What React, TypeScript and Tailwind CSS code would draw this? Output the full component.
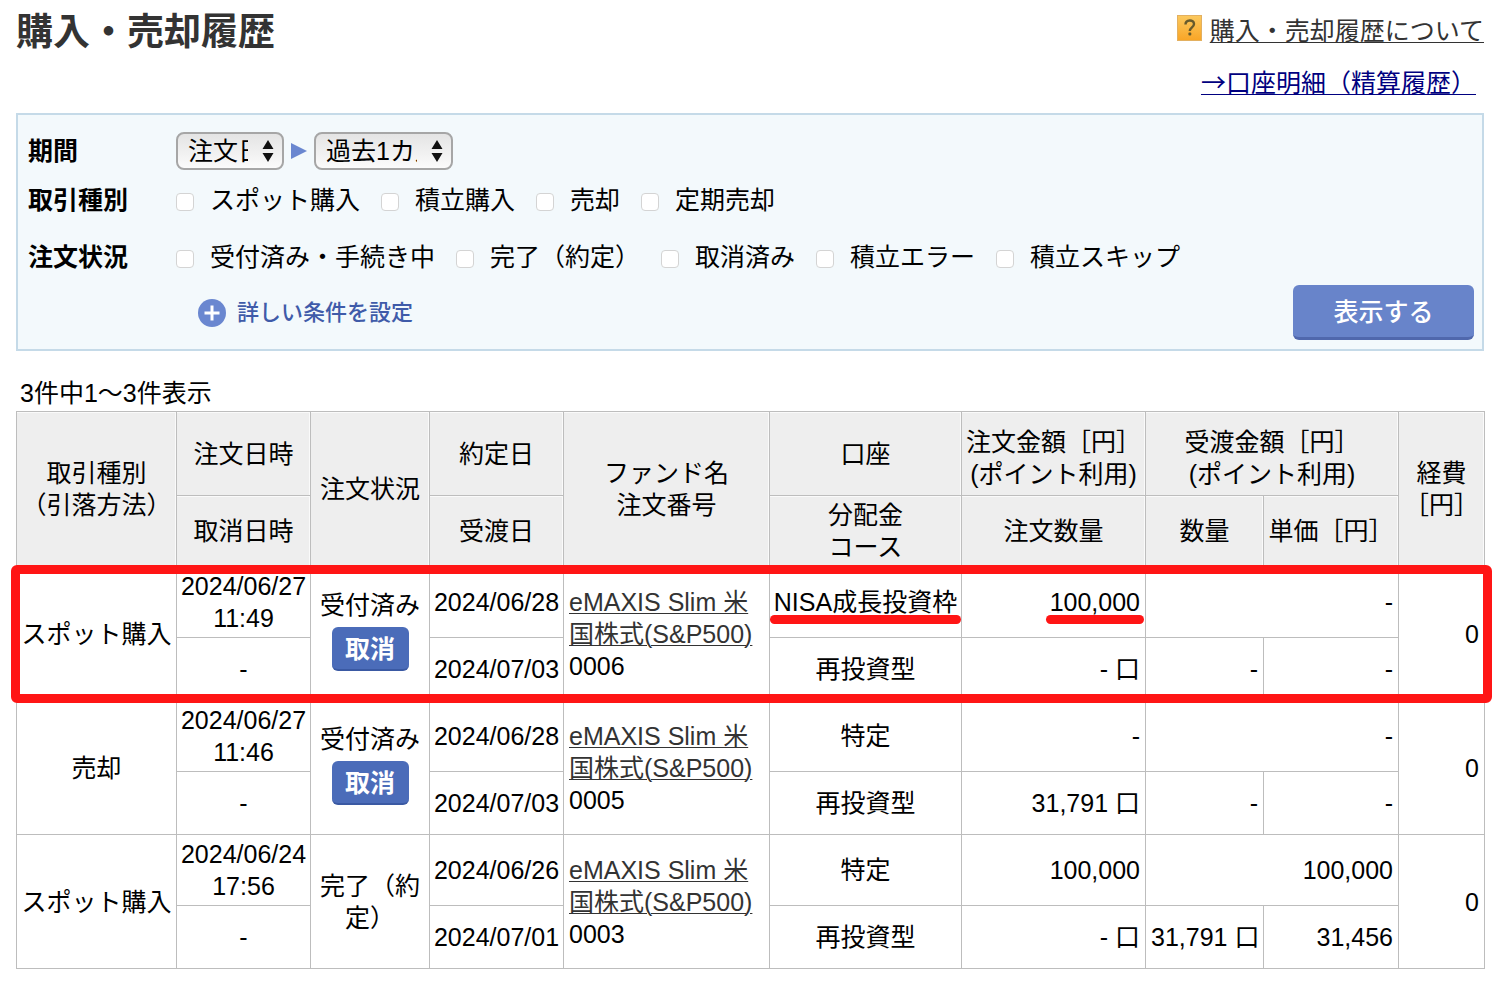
import { type ReactNode } from 'react';

type Order = {
  id: string;
  type: string;
  date: string;
  time: string;
  status: string;
  cancelable?: boolean;
  contractDate: string;
  deliveryDate: string;
  account: string;
  amount: string;
  orderUnits: string;
  settlement: string;
  units: string;
  price: string;
  marked?: boolean;
};

const orders: Order[] = [
  {
    id: '0006',
    type: 'スポット購入',
    date: '2024/06/27',
    time: '11:49',
    status: '受付済み',
    cancelable: true,
    contractDate: '2024/06/28',
    deliveryDate: '2024/07/03',
    account: 'NISA成長投資枠',
    amount: '100,000',
    orderUnits: '- 口',
    settlement: '-',
    units: '-',
    price: '-',
    marked: true,
  },
  {
    id: '0005',
    type: '売却',
    date: '2024/06/27',
    time: '11:46',
    status: '受付済み',
    cancelable: true,
    contractDate: '2024/06/28',
    deliveryDate: '2024/07/03',
    account: '特定',
    amount: '-',
    orderUnits: '31,791 口',
    settlement: '-',
    units: '-',
    price: '-',
  },
  {
    id: '0003',
    type: 'スポット購入',
    date: '2024/06/24',
    time: '17:56',
    status: '完了（約定）',
    contractDate: '2024/06/26',
    deliveryDate: '2024/07/01',
    account: '特定',
    amount: '100,000',
    orderUnits: '- 口',
    settlement: '100,000',
    units: '31,791 口',
    price: '31,456',
  },
];

const tradeTypes = ['スポット購入', '積立購入', '売却', '定期売却'];
const orderStatuses = ['受付済み・手続き中', '完了（約定）', '取消済み', '積立エラー', '積立スキップ'];

const Select = ({ label, options, className }: { label: string; options: string[]; className: string }) => (
  <div className={`relative ${className}`}>
    <select
      aria-label={label}
      className="h-[38px] w-full appearance-none rounded-lg border-2 border-[#a6a6a6] bg-linear-to-b from-[#e4e4e4] to-[#fbfbfb] pl-[10px] pr-[34px] text-black"
    >
      {options.map((o) => (
        <option key={o}>{o}</option>
      ))}
    </select>
    <svg viewBox="0 0 12 22" className="pointer-events-none absolute right-[10px] top-2 h-[22px] w-3" fill="#111">
      <path d="M6 0 11.5 9H.5zM6 22 .5 13h11z" />
    </svg>
  </div>
);

const CheckGroup = ({ items }: { items: string[] }) => (
  <div className="flex flex-wrap gap-x-[21px]">
    {items.map((item) => (
      <label key={item} className="flex items-center gap-4">
        <input
          type="checkbox"
          className="mt-1 size-[18px] appearance-none rounded-sm border border-[#d4d4d4] bg-white checked:bg-[#4b6cb9]"
        />
        {item}
      </label>
    ))}
  </div>
);

const FilterRow = ({ label, className, children }: { label: string; className: string; children: ReactNode }) => (
  <div className={`flex items-center ${className}`}>
    <div className="w-[148px] shrink-0 font-bold">{label}</div>
    {children}
  </div>
);

const Mark = ({ on, children }: { on?: boolean; children: ReactNode }) => (
  <span className="relative inline-block whitespace-nowrap">
    {children}
    {on && <span className="absolute -inset-x-1 top-[29px] h-[9px] rounded-full bg-[#ff1515]" />}
  </span>
);

const Th = ({ pad = 'p-0', children, ...rest }: { pad?: string; children: ReactNode; rowSpan?: number; colSpan?: number }) => (
  <th className={`border border-[#bdbdbd] bg-[#eeeeee] font-normal shadow-[inset_-1px_1px_0_#fafafa] ${pad}`} {...rest}>
    {children}
  </th>
);

const Td = ({ align = 'text-center px-0', children, ...rest }: { align?: string; children: ReactNode; rowSpan?: number; colSpan?: number }) => (
  <td className={`border border-[#bdbdbd] py-0 ${align}`} {...rest}>
    {children}
  </td>
);

const OrderRows = ({ order }: { order: Order }) => (
  <tbody>
    <tr className="h-[71px]">
      <Td rowSpan={2}>{order.type}</Td>
      <Td>
        {order.date}
        <br />
        {order.time}
      </Td>
      <Td align="text-center px-[5px]" rowSpan={2}>
        {order.status}
        {order.cancelable && (
          <button
            type="button"
            className="mx-auto mb-2 mt-1.5 block h-11 w-[77px] rounded-md border-b-2 border-[#3a59a3] bg-[#4b6cb9] pt-0.5 font-bold text-white"
          >
            取消
          </button>
        )}
      </Td>
      <Td>{order.contractDate}</Td>
      <Td align="text-left px-[5px]" rowSpan={2}>
        <a href="#fund" className="text-[#333] underline decoration-1 underline-offset-2">
          eMAXIS Slim 米国株式(S&amp;P500)
        </a>
        <br />
        {order.id}
      </Td>
      <Td>
        <Mark on={order.marked}>{order.account}</Mark>
      </Td>
      <Td align="text-right px-[5px]">
        <Mark on={order.marked}>{order.amount}</Mark>
      </Td>
      <Td align="text-right px-[5px]" colSpan={2}>{order.settlement}</Td>
      <Td align="text-right px-[5px]" rowSpan={2}>0</Td>
    </tr>
    <tr className="h-[63px]">
      <Td>-</Td>
      <Td>{order.deliveryDate}</Td>
      <Td>再投資型</Td>
      <Td align="text-right px-[5px]">{order.orderUnits}</Td>
      <Td align="text-right px-[5px] whitespace-nowrap">{order.units}</Td>
      <Td align="text-right px-[5px]">{order.price}</Td>
    </tr>
  </tbody>
);

const App = () => {
  return (
    <div className="bg-white px-4 pb-3 font-['Liberation_Sans','Noto_Sans_CJK_JP',sans-serif] text-[25px] leading-8 text-black" lang="ja">
      <header className="flex items-start justify-between pt-[15px]">
        <h1 className="text-[37px] font-bold leading-9 text-[#333]">購入・売却履歴</h1>
        <div className="flex flex-col items-end gap-[18px]">
          <div className="flex items-start gap-2">
            <svg viewBox="0 0 25 26" className="h-[26px] w-[25px]">
              <defs>
                <linearGradient id="help" x1="0" y1="0" x2="0" y2="1">
                  <stop offset="0" stopColor="#fbc95f" />
                  <stop offset="1" stopColor="#f9a526" />
                </linearGradient>
              </defs>
              <rect x=".5" y=".5" width="24" height="25" fill="url(#help)" stroke="#e3b060" />
              <path d="M8.500 9.500C8.500 4.200 17 4.200 17 9c0 3.300-4.200 3.400-4.200 7" fill="none" stroke="#665a2c" strokeWidth="2.400" />
              <rect x="11.400" y="17.600" width="2.900" height="2.900" rx="1" fill="#665a2c" />
            </svg>
            <a href="#about" className="text-[#333] underline decoration-1 underline-offset-2">購入・売却履歴について</a>
          </div>
          <a href="#statement" className="mr-2 text-[#000080] underline decoration-1 underline-offset-2">
            <span className="font-['Noto_Sans_CJK_JP',sans-serif]">→</span>口座明細（精算履歴）
          </a>
        </div>
      </header>

      <form className="mt-[14px] border-2 border-[#c5dae8] bg-[#f3f9fc] pb-[9px] pl-[10px] pr-2 pt-[17px]" onSubmit={(e) => e.preventDefault()}>
        <FilterRow label="期間" className="h-[38px]">
          <Select label="期間の種類" options={['注文日', '約定日', '受渡日']} className="w-[108px]" />
          <svg viewBox="0 0 16 16" className="mx-[7px] size-4" fill="#6a87d0">
            <path d="M0 0 16 8 0 16z" />
          </svg>
          <Select label="期間" options={['過去1カ月', '過去3カ月', '過去1年']} className="w-[139px]" />
        </FilterRow>
        <FilterRow label="取引種別" className="mt-[14px]">
          <CheckGroup items={tradeTypes} />
        </FilterRow>
        <FilterRow label="注文状況" className="mt-[25px]">
          <CheckGroup items={orderStatuses} />
        </FilterRow>
        <div className="mt-3 flex items-center justify-between">
          <button type="button" className="ml-[170px] flex items-center gap-[11px] text-[22px] font-medium text-[#3f5ba9]">
            <svg viewBox="0 0 28 28" className="size-7">
              <circle cx="14" cy="14" r="14" fill="#6a87d0" />
              <path d="M14 6.500v15M6.500 14h15" stroke="#fff" strokeWidth="3" />
            </svg>
            詳しい条件を設定
          </button>
          <button type="submit" className="h-[55px] w-[181px] rounded-md border-b-3 border-[#5068ad] bg-[#6884ca] pt-0.5 font-medium text-white">
            表示する
          </button>
        </div>
      </form>

      <p className="mt-6 pl-1 leading-9">3件中1〜3件表示</p>

      <div className="relative">
        <table className="w-full table-fixed border-collapse">
          <colgroup>
            <col className="w-[160px]" />
            <col className="w-[134px]" />
            <col className="w-[119px]" />
            <col className="w-[134px]" />
            <col className="w-[206px]" />
            <col className="w-[192px]" />
            <col className="w-[184px]" />
            <col className="w-[118px]" />
            <col className="w-[135px]" />
            <col className="w-[86px]" />
          </colgroup>
          <thead>
            <tr className="h-[84px]">
              <Th rowSpan={2}>
                取引種別
                <br />
                （引落方法）
              </Th>
              <Th>注文日時</Th>
              <Th rowSpan={2}>注文状況</Th>
              <Th>約定日</Th>
              <Th rowSpan={2}>
                ファンド名
                <br />
                注文番号
              </Th>
              <Th>口座</Th>
              <Th pad="px-0 pb-0 pt-2">
                注文金額［円］
                <br />
                (ポイント利用)
              </Th>
              <Th pad="px-0 pb-0 pt-2" colSpan={2}>
                受渡金額［円］
                <br />
                (ポイント利用)
              </Th>
              <Th rowSpan={2}>
                経費
                <br />
                ［円］
              </Th>
            </tr>
            <tr className="h-[71px]">
              <Th>取消日時</Th>
              <Th>受渡日</Th>
              <Th>
                分配金
                <br />
                コース
              </Th>
              <Th>注文数量</Th>
              <Th>数量</Th>
              <Th>単価［円］</Th>
            </tr>
          </thead>
          {orders.map((order) => (
            <OrderRows key={order.id} order={order} />
          ))}
        </table>
        {/* highlight around the newest order */}
        <div className="pointer-events-none absolute -left-[5px] -right-2 top-[154px] h-[138px] rounded-md border-9 border-[#ff1515]" />
      </div>
    </div>
  );
};

export default App;
